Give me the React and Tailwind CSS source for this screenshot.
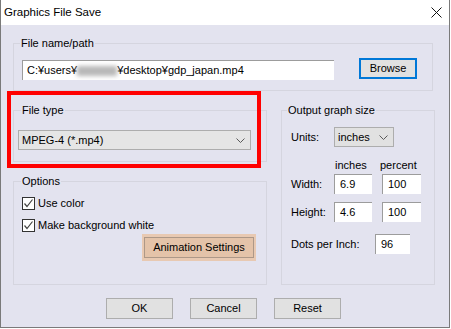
import React from 'react';

const Chevron = () => (
  <svg width="9" height="5" viewBox="0 0 9 5" className="shrink-0">
    <polyline points="0.5,0.5 4.5,4.5 8.5,0.5" fill="none" stroke="#5a5a5a" strokeWidth="1" />
  </svg>
);

const Group = ({ label, labelClass = 'ml-[7px]', className = '', children }) => (
  <div className={`border border-[#d5d5df] ${className}`}>
    <div className={`-mt-[8px] w-fit px-[1px] bg-[#e3e3ef] leading-[14px] ${labelClass}`}>{label}</div>
    {children}
  </div>
);

const Field = ({ value, className = '' }) => (
  <div className={`h-[20px] bg-white border-t border-l border-[#9c9c9c] flex items-center pl-[5px] ${className}`}>
    {value}
  </div>
);

const Check = ({ label, className = '' }) => (
  <div className={`flex items-center h-[14px] ${className}`}>
    <div className="w-[13px] h-[13px] border border-[#333] bg-white flex items-center justify-center">
      <svg width="11" height="11" viewBox="0 0 11 11">
        <polyline points="1.5,5.5 4,8.5 9.5,1.5" fill="none" stroke="#444" strokeWidth="1.2" />
      </svg>
    </div>
    <span className="ml-[3px]">{label}</span>
  </div>
);

const Btn = ({ children }) => (
  <button className="w-[67px] h-[21px] bg-[#e1e1e1] border border-[#adadad] flex items-center justify-center">
    {children}
  </button>
);

export default function App() {
  return (
    <div className="w-[451px] h-[329px] bg-white font-['Liberation_Sans',Arial,sans-serif] text-[11px] text-black">
      <div className="relative w-[450px] h-[328px] flex flex-col border-l border-r border-b border-[#7a7a7a]">
        {/* title bar */}
        <div className="h-[25px] flex items-center justify-between bg-white">
          <span className="pl-[3px] text-[11.5px]">Graphics File Save</span>
          <svg width="11" height="11" viewBox="0 0 11 11" className="mr-[7px]">
            <path d="M0.5 0.5L10.5 10.5M10.5 0.5L0.5 10.5" stroke="#111" strokeWidth="1" />
          </svg>
        </div>

        <div className="flex-1 bg-[#e3e3ef] flex flex-col">
          <Group label="File name/path" labelClass="ml-[6px]" className="ml-[12px] mt-[18px] w-[420px] pb-[10px]">
            <div className="flex items-start mt-[8px] pl-[8px]">
              <div className="mt-[2px] w-[312px] h-[20px] bg-white border-t border-l border-[#9c9c9c] flex items-center pl-[4px] whitespace-nowrap overflow-hidden">
                <span>C:¥users¥</span>
                <span className="inline-block w-[40px] h-[10px] bg-[#b8b8b8] blur-[2px]" />
                <span>¥desktop¥gdp_japan.mp4</span>
              </div>
              <button className="ml-[25px] w-[58px] h-[21px] border-2 border-[#0078d7] bg-[#e1e1e1] flex items-center justify-center">
                Browse
              </button>
            </div>
          </Group>

          <div className="flex mt-[19px]">
            <div className="ml-[12px] w-[254px] flex flex-col">
              <Group label="File type" className="h-[52px]">
                <div className="mt-[13px] ml-[4px] w-[233px] h-[20px] bg-[#e5e5e5] border border-[#adadad] flex items-center justify-between pl-[3px] pr-[5px]">
                  <span>MPEG-4 (*.mp4)</span>
                  <Chevron />
                </div>
              </Group>

              <Group label="Options" className="mt-[19px] h-[104px]">
                <Check label="Use color" className="mt-[8px] ml-[8px]" />
                <Check label="Make background white" className="mt-[8px] ml-[8px]" />
                <div className="mt-[2px] ml-[128px] w-[114px] h-[27px] bg-[#e8c9b2] px-[2px] pt-[3px] pb-[3px]">
                  <button className="w-full h-full bg-[#e4c3a9] border border-[#ad9888] flex items-center justify-center">
                    Animation Settings
                  </button>
                </div>
              </Group>
            </div>

            <Group label="Output graph size" labelClass="ml-[5px]" className="ml-[14px] w-[154px] h-[175px]">
              <div className="pl-[9px]">
                <div className="flex items-center mt-[10px]">
                  <span className="w-[43px]">Units:</span>
                  <div className="w-[60px] h-[20px] bg-[#e1e1e1] border border-[#adadad] flex items-center justify-between pl-[3px] pr-[5px]">
                    <span>inches</span>
                    <Chevron />
                  </div>
                </div>
                <div className="flex mt-[11px] leading-[14px]">
                  <span className="ml-[44px] w-[45px]">inches</span>
                  <span>percent</span>
                </div>
                <div className="flex items-center mt-[2px]">
                  <span className="w-[43px]">Width:</span>
                  <Field value="6.9" className="w-[38px]" />
                  <Field value="100" className="ml-[10px] w-[39px]" />
                </div>
                <div className="flex items-center mt-[8px]">
                  <span className="w-[43px]">Height:</span>
                  <Field value="4.6" className="w-[38px]" />
                  <Field value="100" className="ml-[10px] w-[39px]" />
                </div>
                <div className="flex items-center mt-[12px]">
                  <span className="w-[84px]">Dots per Inch:</span>
                  <Field value="96" className="w-[35px]" />
                </div>
              </div>
            </Group>
          </div>

          <div className="flex mt-[13px] ml-[105px] gap-[17px]">
            <Btn>OK</Btn>
            <Btn>Cancel</Btn>
            <Btn>Reset</Btn>
          </div>
        </div>

        <div className="absolute left-[6px] top-[91px] w-[254px] h-[77px] border-4 border-[#ff0000]" />
      </div>
    </div>
  );
}
